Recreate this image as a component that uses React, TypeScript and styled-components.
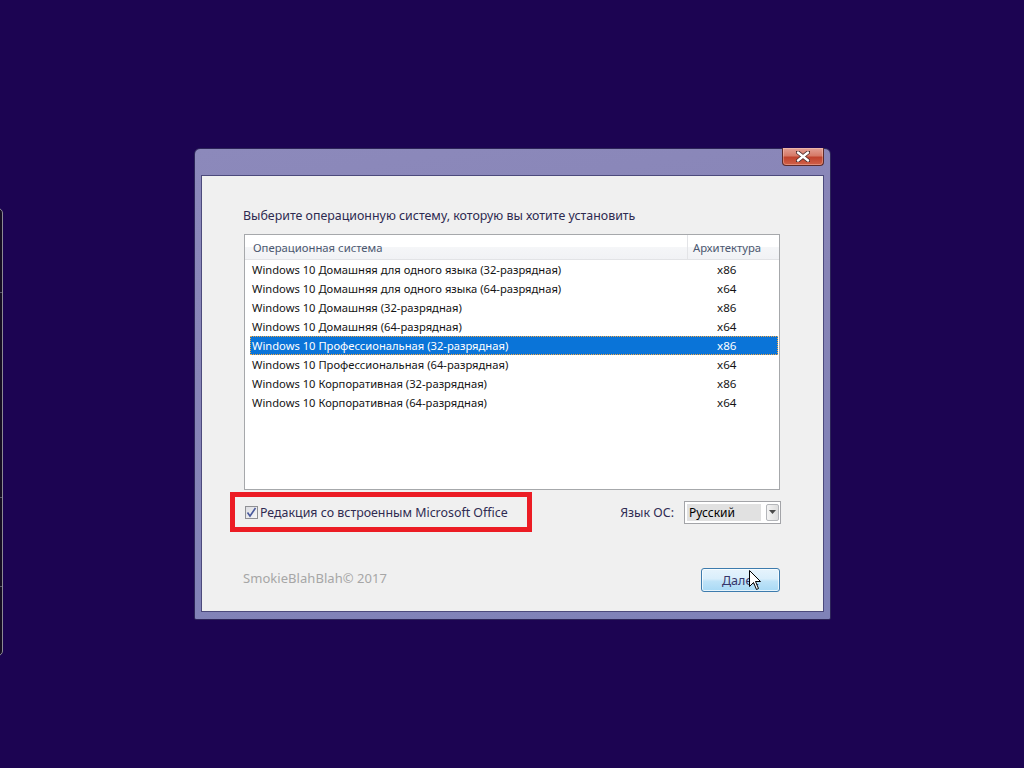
import React from 'react';
import styled, { createGlobalStyle } from 'styled-components';

const Global = createGlobalStyle`
  html, body { margin: 0; padding: 0; background: #1c0452; }
  body { width: 1024px; height: 768px; overflow: hidden; font-family: "Noto Sans", "Open Sans", sans-serif; }
  * { box-sizing: border-box; }
`;

const Desktop = styled.div`
  position: relative;
  width: 1024px;
  height: 768px;
  background: #1c0452;
`;

const SideWindow = styled.div`
  position: absolute;
  left: -10px;
  top: 208px;
  width: 13px;
  height: 448px;
  background: #140c22;
  border: 1px solid #8c8a94;
  border-radius: 0 5px 5px 0;
  display: flex;
  flex-direction: column;
  padding-top: 83px;
`;

const SideLine = styled.div<{ $gap: number }>`
  height: 1px;
  background: #5a566a;
  margin-bottom: ${(p) => p.$gap}px;
`;

const Frame = styled.div`
  position: absolute;
  left: 194px;
  top: 148px;
  width: 637px;
  height: 472px;
  display: flex;
  flex-direction: column;
  padding: 0 6px 7px 6px;
  background: linear-gradient(170deg, #8c89bb 0%, #8784b6 40%, #7f82b8 100%);
  border: 1px solid #2c2458;
  border-radius: 6px 6px 2px 2px;
`;

const TitleBar = styled.div`
  height: 26px;
  display: flex;
  justify-content: flex-end;
  align-items: flex-start;
  flex-shrink: 0;
`;

const CloseButton = styled.div`
  margin-top: -1px;
  width: 42px;
  height: 18px;
  border: 1px solid #5c2a2a;
  border-top: none;
  border-radius: 0 0 4px 4px;
  background: linear-gradient(#e3a095 0%, #d67a68 45%, #c0432e 55%, #d06048 100%);
  display: flex;
  align-items: center;
  justify-content: center;
  box-shadow: inset 0 0 0 1px rgba(255, 220, 210, 0.35);
`;

const Client = styled.div`
  flex: 1;
  background: #f0f0f0;
  border: 1px solid #4c4a7c;
  padding: 32px 42px 0 41px;
  display: flex;
  flex-direction: column;
  position: relative;
`;

const Heading = styled.div`
  font-size: 12.4px;
  line-height: 16px;
  color: #2e2a50;
  white-space: nowrap;
`;

const ListBox = styled.div`
  margin: 10px 0 0 1px;
  width: 536px;
  height: 256px;
  background: #fff;
  border: 1px solid #a6a8ab;
  display: flex;
  flex-direction: column;
`;

const Header = styled.div`
  height: 25px;
  display: flex;
  border-bottom: 1px solid #e2e3e6;
  background: linear-gradient(#ffffff 0%, #ffffff 50%, #f5f6f8 50%, #f1f2f5 100%);
`;

const HeaderCell = styled.div<{ $w?: number }>`
  ${(p) => (p.$w ? `width: ${p.$w}px; border-right: 1px solid #e3e4e7;` : 'flex: 1;')}
  padding-left: ${(p) => (p.$w ? 8 : 5)}px;
  display: flex;
  align-items: center;
  font-size: 11.3px;
  color: #4c5870;
  white-space: nowrap;
`;

const Row = styled.div<{ $sel?: boolean }>`
  height: 19px;
  margin: 0 1px 0 5px;
  display: flex;
  align-items: center;
  font-size: 11.2px;
  white-space: nowrap;
  color: ${(p) => (p.$sel ? '#ffffff' : '#141414')};
  background: ${(p) => (p.$sel ? '#0a74d8' : 'transparent')};
  outline: ${(p) => (p.$sel ? '1px dotted #f2a846' : 'none')};
  outline-offset: -1px;
`;

const NameCell = styled.div`
  width: 467px;
  padding-left: 2px;
`;

const ArchCell = styled.div`
  flex: 1;
  font-size: 11.6px;
`;

const OptionsRow = styled.div`
  margin-top: 2px;
  height: 40px;
  display: flex;
  align-items: center;
  justify-content: space-between;
`;

const Highlight = styled.div`
  margin-left: -13px;
  width: 302px;
  height: 40px;
  border: 5px solid #ec1c24;
  display: flex;
  align-items: center;
  padding-left: 10px;
  gap: 2px;
`;

const CheckBox = styled.div`
  width: 13px;
  height: 13px;
  border: 1px solid #8f9094;
  background: linear-gradient(135deg, #dcdde2, #f6f6f7);
  display: flex;
  align-items: center;
  justify-content: center;
  margin-top: 1px;
`;

const CheckLabel = styled.span`
  font-size: 12.4px;
  color: #2f2b52;
  white-space: nowrap;
`;

const LangGroup = styled.div`
  display: flex;
  align-items: center;
  gap: 10px;
`;

const LangLabel = styled.span`
  font-size: 12.4px;
  color: #2f2b52;
`;

const Combo = styled.div`
  width: 97px;
  height: 23px;
  border: 1px solid #a3a4a8;
  background: #fff;
  display: flex;
  align-items: stretch;
  padding: 2px 1px 2px 2px;
`;

const ComboValue = styled.div`
  width: 74px;
  background: #e1e1e1;
  font-size: 12px;
  color: #000;
  display: flex;
  align-items: center;
  padding-left: 2px;
`;

const ComboArrow = styled.div`
  margin-left: auto;
  width: 13px;
  border: 1px solid #b4b6ba;
  border-radius: 2px;
  background: linear-gradient(90deg, #f4f4f4, #dedede);
  display: flex;
  align-items: center;
  justify-content: center;
`;

const Footer = styled.div`
  margin-top: 36px;
  display: flex;
  align-items: center;
  justify-content: space-between;
`;

const Copyright = styled.span`
  font-size: 13px;
  color: #a6a6a6;
  letter-spacing: 0.05px;
  margin-top: -4px;
`;

const NextButton = styled.div`
  position: relative;
  width: 79px;
  height: 24px;
  margin-right: 1px;
  border: 1px solid #3d7bad;
  border-radius: 3px;
  background: linear-gradient(#e6f3fc 0%, #d9eefb 45%, #bfe3f8 55%, #a8d9f5 100%);
  box-shadow: inset 0 0 0 1px rgba(255, 255, 255, 0.7);
  display: flex;
  align-items: center;
  padding-left: 20px;
  font-size: 12.5px;
  color: #36366a;
`;

const Cursor = styled.svg`
  position: absolute;
  left: 47px;
  top: 1px;
`;

const rows: [string, string][] = [
  ['Windows 10 Домашняя для одного языка (32-разрядная)', 'x86'],
  ['Windows 10 Домашняя для одного языка (64-разрядная)', 'x64'],
  ['Windows 10 Домашняя (32-разрядная)', 'x86'],
  ['Windows 10 Домашняя (64-разрядная)', 'x64'],
  ['Windows 10 Профессиональная (32-разрядная)', 'x86'],
  ['Windows 10 Профессиональная (64-разрядная)', 'x64'],
  ['Windows 10 Корпоративная (32-разрядная)', 'x86'],
  ['Windows 10 Корпоративная (64-разрядная)', 'x64'],
];

export default function App() {
  return (
    <Desktop>
      <Global />
      <SideWindow>
        <SideLine $gap={204} />
        <SideLine $gap={88} />
        <SideLine $gap={0} />
      </SideWindow>
      <Frame>
        <TitleBar>
          <CloseButton>
            <svg width="14" height="11" viewBox="0 0 14 11">
              <path
                d="M1.5 1 L12.5 10 M12.5 1 L1.5 10"
                stroke="#4a2a2a"
                strokeWidth="4"
                strokeLinecap="round"
                fill="none"
              />
              <path d="M2 1.5 L12 9.5 M12 1.5 L2 9.5" stroke="#ffffff" strokeWidth="2.4" strokeLinecap="round" fill="none" />
            </svg>
          </CloseButton>
        </TitleBar>
        <Client>
          <Heading>Выберите операционную систему, которую вы хотите установить</Heading>
          <ListBox>
            <Header>
              <HeaderCell $w={443}>Операционная система</HeaderCell>
              <HeaderCell>Архитектура</HeaderCell>
            </Header>
            {rows.map(([name, arch], i) => (
              <Row key={i} $sel={i === 4}>
                <NameCell>{name}</NameCell>
                <ArchCell>{arch}</ArchCell>
              </Row>
            ))}
          </ListBox>
          <OptionsRow>
            <Highlight>
              <CheckBox>
                <svg width="11" height="11" viewBox="0 0 11 11">
                  <path d="M1.5 5.5 L4 9 L9.5 1" stroke="#4a5a9c" strokeWidth="1.6" fill="none" />
                </svg>
              </CheckBox>
              <CheckLabel>Редакция со встроенным Microsoft Office</CheckLabel>
            </Highlight>
            <LangGroup>
              <LangLabel>Язык ОС:</LangLabel>
              <Combo>
                <ComboValue>Русский</ComboValue>
                <ComboArrow>
                  <svg width="7" height="4" viewBox="0 0 7 4">
                    <path d="M0 0 L7 0 L3.5 4 Z" fill="#4a4a4a" />
                  </svg>
                </ComboArrow>
              </Combo>
            </LangGroup>
          </OptionsRow>
          <Footer>
            <Copyright>SmokieBlahBlah© 2017</Copyright>
            <NextButton>
              Далее
              <Cursor width="13" height="21" viewBox="0 0 13 21">
                <path
                  d="M0.5 0.5 L0.5 16.5 L4.5 12.5 L7.5 19.5 L9.5 18.5 L6.5 11.5 L11.5 11.5 Z"
                  fill="#ffffff"
                  stroke="#000000"
                  strokeWidth="1"
                />
              </Cursor>
            </NextButton>
          </Footer>
        </Client>
      </Frame>
    </Desktop>
  );
}
